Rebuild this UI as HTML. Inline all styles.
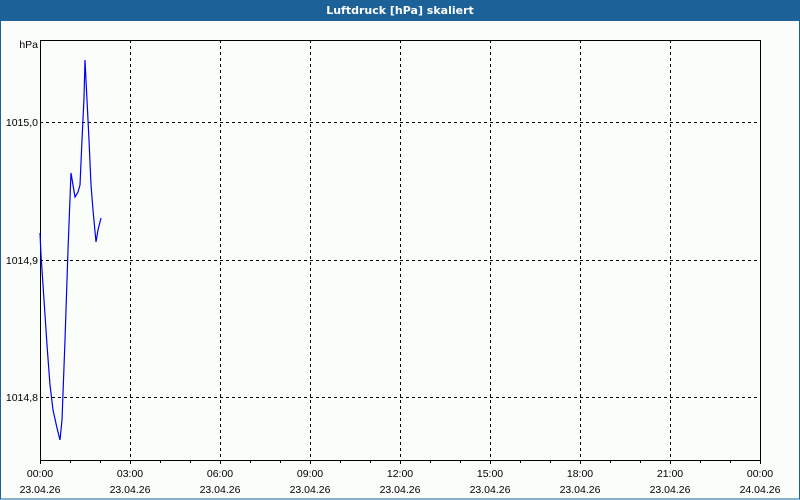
<!DOCTYPE html>
<html><head><meta charset="utf-8"><style>
body{margin:0;width:800px;height:500px;overflow:hidden;background:#fbfdfb;font-family:"Liberation Sans",sans-serif}
</style></head><body>
<svg width="800" height="500" xmlns="http://www.w3.org/2000/svg" style="position:absolute;left:0;top:0">
<rect x="0" y="0" width="800" height="500" fill="#fbfdfb"/>
<rect x="0" y="0" width="800" height="21" fill="#1d6199"/>
<rect x="0.5" y="20" width="799" height="479" fill="none" stroke="#1d6199" stroke-width="1"/>
<text x="400" y="14" fill="#fff" font-size="11" font-weight="bold" text-anchor="middle" font-family="DejaVu Sans, sans-serif">Luftdruck [hPa] skaliert</text>
<g stroke="#000" stroke-dasharray="3,3" stroke-width="1">
<line x1="130.5" y1="40" x2="130.5" y2="460"/><line x1="220.5" y1="40" x2="220.5" y2="460"/>
<line x1="310.5" y1="40" x2="310.5" y2="460"/><line x1="400.5" y1="40" x2="400.5" y2="460"/>
<line x1="490.5" y1="40" x2="490.5" y2="460"/><line x1="580.5" y1="40" x2="580.5" y2="460"/>
<line x1="670.5" y1="40" x2="670.5" y2="460"/>
<line x1="40" y1="122.5" x2="760" y2="122.5"/><line x1="40" y1="260.5" x2="760" y2="260.5"/>
<line x1="40" y1="397.5" x2="760" y2="397.5"/>
</g>
<rect x="40.5" y="40.5" width="720" height="420" fill="none" stroke="#000" stroke-width="1"/>
<g stroke="#000">
<line x1="40.5" y1="460" x2="40.5" y2="464"/><line x1="70.5" y1="460" x2="70.5" y2="463"/><line x1="100.5" y1="460" x2="100.5" y2="463"/>
<line x1="130.5" y1="460" x2="130.5" y2="464"/><line x1="160.5" y1="460" x2="160.5" y2="463"/><line x1="190.5" y1="460" x2="190.5" y2="463"/>
<line x1="220.5" y1="460" x2="220.5" y2="464"/><line x1="250.5" y1="460" x2="250.5" y2="463"/><line x1="280.5" y1="460" x2="280.5" y2="463"/>
<line x1="310.5" y1="460" x2="310.5" y2="464"/><line x1="340.5" y1="460" x2="340.5" y2="463"/><line x1="370.5" y1="460" x2="370.5" y2="463"/>
<line x1="400.5" y1="460" x2="400.5" y2="464"/><line x1="430.5" y1="460" x2="430.5" y2="463"/><line x1="460.5" y1="460" x2="460.5" y2="463"/>
<line x1="490.5" y1="460" x2="490.5" y2="464"/><line x1="520.5" y1="460" x2="520.5" y2="463"/><line x1="550.5" y1="460" x2="550.5" y2="463"/>
<line x1="580.5" y1="460" x2="580.5" y2="464"/><line x1="610.5" y1="460" x2="610.5" y2="463"/><line x1="640.5" y1="460" x2="640.5" y2="463"/>
<line x1="670.5" y1="460" x2="670.5" y2="464"/><line x1="700.5" y1="460" x2="700.5" y2="463"/><line x1="730.5" y1="460" x2="730.5" y2="463"/>
<line x1="760.5" y1="460" x2="760.5" y2="464"/>
</g>
<polyline fill="none" stroke="#0000ee" stroke-width="1.2" points="40,233 41,255 44,300 47,345 50,385 53,410 57,428 60,440 62,420 65,340 68,250 71,173 73,185 75,197 78,192 80,185 82,140 84,98 85,60 87,100 89,140 91,185 93,210 96,242 98,230 101,218"/>
<g font-size="10.5" fill="#000" font-family="Liberation Sans, sans-serif">
<text x="38" y="48" text-anchor="end">hPa</text>
<text x="38" y="126" text-anchor="end">1015,0</text>
<text x="38" y="264" text-anchor="end">1014,9</text>
<text x="38" y="401" text-anchor="end">1014,8</text>
<g text-anchor="middle">
<text x="40" y="477">00:00</text><text x="40" y="493">23.04.26</text>
<text x="130" y="477">03:00</text><text x="130" y="493">23.04.26</text>
<text x="220" y="477">06:00</text><text x="220" y="493">23.04.26</text>
<text x="310" y="477">09:00</text><text x="310" y="493">23.04.26</text>
<text x="400" y="477">12:00</text><text x="400" y="493">23.04.26</text>
<text x="490" y="477">15:00</text><text x="490" y="493">23.04.26</text>
<text x="580" y="477">18:00</text><text x="580" y="493">23.04.26</text>
<text x="670" y="477">21:00</text><text x="670" y="493">23.04.26</text>
<text x="760" y="477">00:00</text><text x="760" y="493">24.04.26</text>
</g></g>
</svg>
</body></html>
